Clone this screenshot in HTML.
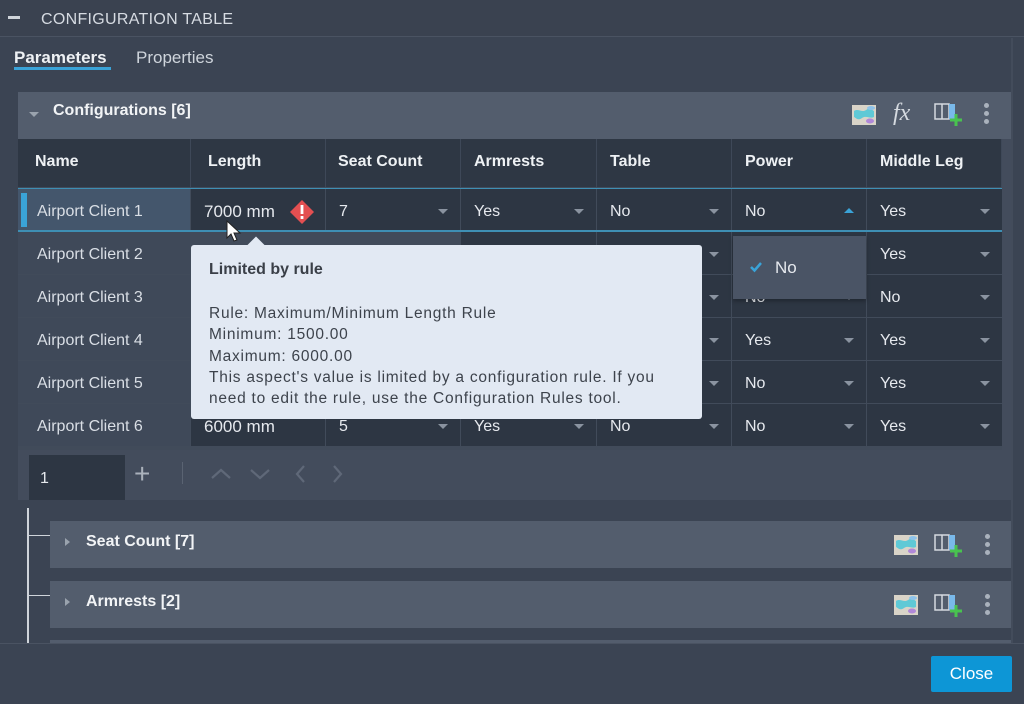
<!DOCTYPE html>
<html><head><meta charset="utf-8">
<style>
*{box-sizing:border-box;margin:0;padding:0}
body{width:1024px;height:704px;overflow:hidden;background:#3b4453;font-family:"Liberation Sans",sans-serif;color:#e4e8ee;position:relative}
.a{position:absolute}
.title{left:0;top:0;width:1024px;height:37px;background:#3a4250;border-bottom:1px solid #4a5362}
.cell{position:absolute;height:42px;background:#2d3643;font-size:16px;line-height:46px;padding-left:13px;color:#e6e9ee}
.nm{background:#3f4959;padding-left:19px;color:#d9dee5}
.hd{position:absolute;top:139px;height:48px;background:#2e3744;font-weight:bold;font-size:16px;line-height:46px;padding-left:17px;color:#eef1f4;border-right:1px solid #3e4858}
.arr{position:absolute;right:12px;top:20px;width:0;height:0;border-left:5px solid transparent;border-right:5px solid transparent;border-top:5px solid #8a93a0}
.sub{position:absolute;left:50px;width:961px;height:47px;background:#535d6d;font-weight:bold;font-size:16px;line-height:40px;padding-left:36px;color:#f2f4f6}
.tri{position:absolute;left:15px;top:17px;border-top:4px solid transparent;border-bottom:4px solid transparent;border-left:5px solid #9aa3ae}
</style></head><body>
<div class="a title"></div>
<div class="a" style="left:8px;top:16px;width:12px;height:3px;background:#cfd4da"></div>
<div class="a" style="left:41px;top:11px;font-size:16px;letter-spacing:0.3px;color:#d6dbe2">CONFIGURATION TABLE</div>
<div class="a" style="left:14px;top:48px;font-size:17px;font-weight:bold;color:#eef1f4">Parameters</div>
<div class="a" style="left:14px;top:67px;width:97px;height:3px;background:#3aa3d8"></div>
<div class="a" style="left:136px;top:48px;font-size:17px;color:#cfd5dc">Properties</div>
<div class="a" style="left:1011px;top:38px;width:2px;height:605px;background:#434c5b"></div>

<div class="a" style="left:18px;top:92px;width:993px;height:408px;background:#434c5c"></div>
<div class="a" style="left:18px;top:92px;width:993px;height:47px;background:#535d6d"></div>
<div class="a" style="left:29px;top:112px;border-left:5px solid transparent;border-right:5px solid transparent;border-top:5px solid #9aa3ae"></div>
<div class="a" style="left:53px;top:102px;font-size:16px;font-weight:bold;color:#f2f4f6">Configurations [6]</div>
<svg class="a" style="left:851px;top:103px" width="26" height="24" viewBox="0 0 26 24"><path d="M1 2h24v20H1z" fill="#d9d4c8"/><path d="M3 8c4-3 8 2 12-1s6 0 8 1v6c-4 2-8-2-12 1s-6 0-8-1z" fill="#5fc9d6"/><ellipse cx="20" cy="5" rx="4" ry="2" fill="#8ec3ea"/><ellipse cx="19" cy="18" rx="4" ry="2.5" fill="#b088d8"/></svg>
<div class="a" style="left:893px;top:100px;font-family:'Liberation Serif',serif;font-style:italic;font-size:24px;color:#d5dae0">fx</div>
<svg class="a" style="left:934px;top:101px" width="28" height="26" viewBox="0 0 28 26"><path d="M1 3h7v15H1zM8 3h7v15H8z" fill="none" stroke="#d5dae0" stroke-width="1.5"/><rect x="15" y="3" width="6" height="15" fill="#79b9ea"/><path d="M22 13v12M16 19h12" stroke="#48c34f" stroke-width="3"/></svg>
<div class="a" style="left:984px;top:103px;width:5px;height:5px;border-radius:50%;background:#aab2bd;box-shadow:0 8px 0 #aab2bd,0 16px 0 #aab2bd"></div>

<div class="hd" style="left:18px;width:173px">Name</div>
<div class="hd" style="left:191px;width:135px">Length</div>
<div class="hd" style="left:326px;width:135px;padding-left:12px">Seat Count</div>
<div class="hd" style="left:461px;width:136px;padding-left:13px">Armrests</div>
<div class="hd" style="left:597px;width:135px;padding-left:13px">Table</div>
<div class="hd" style="left:732px;width:135px;padding-left:13px">Power</div>
<div class="hd" style="left:867px;width:135px;padding-left:13px">Middle Leg</div>

<div class="a" style="left:18px;top:187px;width:984px;height:263px;background:#414b5a"></div>
<div class="cell nm" style="left:18px;top:189px;width:172px;background:#44566c">Airport Client 1</div>
<div class="a" style="left:21px;top:193px;width:6px;height:34px;background:#3aa3d8"></div>
<div class="cell" style="left:191px;top:189px;width:134px;font-size:17px">7000 mm</div>
<svg class="a" style="left:289px;top:199px" width="26" height="26" viewBox="0 0 26 26"><path d="M13 1L25 13 13 25 1 13z" fill="#e34f51"/><rect x="11.6" y="6" width="2.8" height="9" fill="#fff"/><rect x="11.6" y="17" width="2.8" height="3" fill="#fff"/></svg>
<div class="cell" style="left:326px;top:189px;width:134px">7<i class="arr"></i></div>
<div class="cell" style="left:461px;top:189px;width:135px">Yes<i class="arr"></i></div>
<div class="cell" style="left:597px;top:189px;width:134px">No<i class="arr"></i></div>
<div class="cell" style="left:732px;top:189px;width:134px">No<i class="arr" style="border-top:0;border-bottom:5px solid #3aa3d8;top:19px"></i></div>
<div class="cell" style="left:867px;top:189px;width:135px">Yes<i class="arr"></i></div>
<div class="a" style="left:18px;top:188px;width:984px;height:1px;background:#3e8fb4"></div>
<div class="a" style="left:18px;top:230px;width:984px;height:2px;background:#3e8fb4"></div>

<div class="cell nm" style="left:18px;top:232px;width:172px">Airport Client 2</div>
<div class="cell nm" style="left:18px;top:275px;width:172px">Airport Client 3</div>
<div class="cell nm" style="left:18px;top:318px;width:172px">Airport Client 4</div>
<div class="cell nm" style="left:18px;top:361px;width:172px">Airport Client 5</div>
<div class="cell nm" style="left:18px;top:404px;width:172px">Airport Client 6</div>

<div class="cell" style="left:597px;top:232px;width:134px">No<i class="arr"></i></div>
<div class="cell" style="left:597px;top:275px;width:134px">No<i class="arr"></i></div>
<div class="cell" style="left:597px;top:318px;width:134px">No<i class="arr"></i></div>
<div class="cell" style="left:597px;top:361px;width:134px">No<i class="arr"></i></div>
<div class="cell" style="left:461px;top:232px;width:135px"><i class="arr"></i></div>
<div class="cell" style="left:461px;top:275px;width:135px"><i class="arr"></i></div>
<div class="cell" style="left:461px;top:318px;width:135px"><i class="arr"></i></div>
<div class="cell" style="left:461px;top:361px;width:135px"><i class="arr"></i></div>

<div class="cell" style="left:732px;top:232px;width:134px">No<i class="arr"></i></div>
<div class="cell" style="left:732px;top:275px;width:134px">No<i class="arr"></i></div>
<div class="cell" style="left:732px;top:318px;width:134px">Yes<i class="arr"></i></div>
<div class="cell" style="left:732px;top:361px;width:134px">No<i class="arr"></i></div>
<div class="cell" style="left:867px;top:232px;width:135px">Yes<i class="arr"></i></div>
<div class="cell" style="left:867px;top:275px;width:135px">No<i class="arr"></i></div>
<div class="cell" style="left:867px;top:318px;width:135px">Yes<i class="arr"></i></div>
<div class="cell" style="left:867px;top:361px;width:135px">Yes<i class="arr"></i></div>

<div class="cell" style="left:191px;top:404px;width:134px;font-size:17px">6000 mm</div>
<div class="cell" style="left:326px;top:404px;width:134px">5<i class="arr"></i></div>
<div class="cell" style="left:461px;top:404px;width:135px">Yes<i class="arr"></i></div>
<div class="cell" style="left:597px;top:404px;width:134px">No<i class="arr"></i></div>
<div class="cell" style="left:732px;top:404px;width:134px">No<i class="arr"></i></div>
<div class="cell" style="left:867px;top:404px;width:135px">Yes<i class="arr"></i></div>

<div class="a" style="left:733px;top:236px;width:133px;height:63px;background:#4a5465;box-shadow:0 2px 4px rgba(0,0,0,.3)"></div>
<svg class="a" style="left:749px;top:261px" width="14" height="12" viewBox="0 0 14 12"><path d="M2 6l3.5 3.5L12 2" fill="none" stroke="#3aa3d8" stroke-width="2.5"/></svg>
<div class="a" style="left:775px;top:258px;font-size:17px;color:#e6e9ee">No</div>

<div class="a" style="left:191px;top:245px;width:511px;height:174px;background:#e2e9f3;border-radius:3px"></div>
<div class="a" style="left:250px;top:239px;width:12px;height:12px;background:#e2e9f3;transform:rotate(45deg)"></div>
<div class="a" style="left:209px;top:261px;font-size:16px;font-weight:bold;color:#3a3f47">Limited by rule</div>
<div class="a" style="left:209px;top:303px;width:490px;font-size:15.5px;letter-spacing:0.75px;line-height:21.3px;color:#3d434c;white-space:nowrap">Rule: Maximum/Minimum Length Rule<br>Minimum: 1500.00<br>Maximum: 6000.00<br>This aspect's value is limited by a configuration rule. If you<br>need to edit the rule, use the Configuration Rules tool.</div>

<svg class="a" style="left:226px;top:220px" width="16" height="24" viewBox="0 0 16 24"><path d="M1 1v17l4-4 3 7 3-1-3-7h6z" fill="#fff" stroke="#222" stroke-width="1"/></svg>

<div class="a" style="left:29px;top:455px;width:96px;height:45px;background:#2d3643;font-size:16px;line-height:47px;padding-left:11px;color:#e6e9ee">1</div>
<div class="a" style="left:134px;top:460px;font-size:28px;color:#aab1bb;line-height:28px">+</div>
<div class="a" style="left:182px;top:462px;width:1px;height:22px;background:#5a6372"></div>
<svg class="a" style="left:208px;top:462px" width="140" height="24" viewBox="0 0 140 24"><g fill="none" stroke="#5f6878" stroke-width="2.2"><path d="M4 16l9-8 9 8"/><path d="M43 8l9 8 9-8"/><path d="M96 4l-7 8 7 8"/><path d="M126 4l7 8-7 8"/></g></svg>

<div class="a" style="left:27px;top:508px;width:2px;height:135px;background:#cfd4da"></div>
<div class="a" style="left:27px;top:535px;width:23px;height:1px;background:#cfd4da"></div>
<div class="a" style="left:27px;top:595px;width:23px;height:1px;background:#cfd4da"></div>

<div class="sub" style="top:521px;line-height:42px"><i class="tri"></i>Seat Count [7]</div>
<div class="sub" style="top:581px;line-height:42px"><i class="tri"></i>Armrests [2]</div>
<div class="a" style="left:50px;top:640px;width:961px;height:3px;background:#535d6d"></div>
<svg class="a" style="left:893px;top:533px" width="26" height="24" viewBox="0 0 26 24"><path d="M1 2h24v20H1z" fill="#d9d4c8"/><path d="M3 8c4-3 8 2 12-1s6 0 8 1v6c-4 2-8-2-12 1s-6 0-8-1z" fill="#5fc9d6"/><ellipse cx="20" cy="5" rx="4" ry="2" fill="#8ec3ea"/><ellipse cx="19" cy="18" rx="4" ry="2.5" fill="#b088d8"/></svg>
<svg class="a" style="left:934px;top:532px" width="28" height="26" viewBox="0 0 28 26"><path d="M1 3h7v15H1zM8 3h7v15H8z" fill="none" stroke="#d5dae0" stroke-width="1.5"/><rect x="15" y="3" width="6" height="15" fill="#79b9ea"/><path d="M22 13v12M16 19h12" stroke="#48c34f" stroke-width="3"/></svg>
<div class="a" style="left:985px;top:534px;width:5px;height:5px;border-radius:50%;background:#aab2bd;box-shadow:0 8px 0 #aab2bd,0 16px 0 #aab2bd"></div>
<svg class="a" style="left:893px;top:593px" width="26" height="24" viewBox="0 0 26 24"><path d="M1 2h24v20H1z" fill="#d9d4c8"/><path d="M3 8c4-3 8 2 12-1s6 0 8 1v6c-4 2-8-2-12 1s-6 0-8-1z" fill="#5fc9d6"/><ellipse cx="20" cy="5" rx="4" ry="2" fill="#8ec3ea"/><ellipse cx="19" cy="18" rx="4" ry="2.5" fill="#b088d8"/></svg>
<svg class="a" style="left:934px;top:592px" width="28" height="26" viewBox="0 0 28 26"><path d="M1 3h7v15H1zM8 3h7v15H8z" fill="none" stroke="#d5dae0" stroke-width="1.5"/><rect x="15" y="3" width="6" height="15" fill="#79b9ea"/><path d="M22 13v12M16 19h12" stroke="#48c34f" stroke-width="3"/></svg>
<div class="a" style="left:985px;top:594px;width:5px;height:5px;border-radius:50%;background:#aab2bd;box-shadow:0 8px 0 #aab2bd,0 16px 0 #aab2bd"></div>

<div class="a" style="left:0;top:643px;width:1024px;height:61px;background:#3b4453;border-top:1px solid #4a5362"></div>
<div class="a" style="left:931px;top:656px;width:81px;height:36px;background:#0d96d6;border-radius:2px;color:#fff;font-size:17px;line-height:36px;text-align:center">Close</div>
</body></html>
